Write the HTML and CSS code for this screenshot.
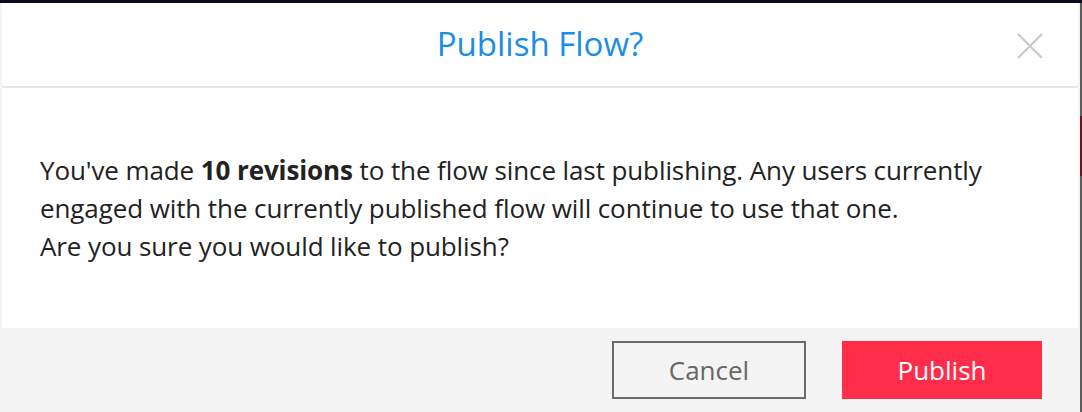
FILE: index.html
```html
<!DOCTYPE html>
<html lang="en">
<head>
    <meta charset="UTF-8">
    <meta name="viewport" content="width=device-width, initial-scale=1.0">
    <title>Publish Flow?</title>
    <link rel="stylesheet" href="styles.css">
</head>
<body>
    <div class="topline"></div>
    <div class="stage">
        <div class="modal">
            <div class="modal-header">
                <h2 class="modal-title">Publish Flow?</h2>
                <button class="close" aria-label="Close">
                    <svg width="28" height="28" viewBox="0 0 28 28">
                        <path d="M2 2 L26 26 M26 2 L2 26" stroke="#c8c8c8" stroke-width="2" fill="none"/>
                    </svg>
                </button>
            </div>
            <div class="modal-body">
                <p>You've made <strong>10 revisions</strong> to the flow since last publishing. Any users currently engaged with the currently published flow will continue to use that one.<br>Are you sure you would like to publish?</p>
            </div>
            <div class="modal-footer">
                <button class="btn btn-cancel">Cancel</button>
                <button class="btn btn-publish">Publish</button>
            </div>
        </div>
        <div class="edge"><div class="edge-red"></div></div>
    </div>
</body>
</html>
```

FILE: styles.css
```css
body {
    margin: 0;
    background-color: #f4f4f4;
    font-family: "Open Sans", Lato, sans-serif;
    color: #222;
    height: 412px;
    overflow: hidden;
}

.topline {
    height: 3px;
    background-color: #0b0e18;
}

.stage {
    display: flex;
}

.modal {
    flex: 1;
    margin: 0 2px;
}

.modal-header {
    position: relative;
    height: 83px;
    background-color: #fff;
    border-bottom: 2px solid #e6e6e6;
    display: flex;
    align-items: center;
    justify-content: center;
}

.modal-title {
    margin: 0 0 2px;
    font-weight: normal;
    font-size: 33px;
    color: #1a8ee6;
}

.close {
    position: absolute;
    right: 34px;
    top: 29px;
    padding: 0;
    border: none;
    background: none;
    cursor: pointer;
    line-height: 0;
}

.modal-body {
    background-color: #fff;
    height: 240px;
    padding: 0 38px;
    display: flex;
    align-items: center;
}

.modal-body p {
    margin: 0;
    font-size: 26px;
    line-height: 38px;
    letter-spacing: -0.1px;
}

.modal-footer {
    display: flex;
    justify-content: flex-end;
    gap: 36px;
    padding: 13px 36px 0 0;
}

.btn {
    height: 58px;
    font-family: "Open Sans", Lato, sans-serif;
    font-size: 26px;
    cursor: pointer;
}

.btn-cancel {
    width: 194px;
    background-color: transparent;
    border: 2px solid #6b6b6b;
    color: #666;
}

.btn-publish {
    width: 200px;
    background-color: #ff2d4a;
    border: none;
    color: #fff;
}

.edge {
    width: 2px;
    height: 409px;
    background-color: #5c5c5c;
    padding-top: 113px;
    box-sizing: border-box;
}

.edge-red {
    height: 60px;
    background-color: #6e1020;
}
```
